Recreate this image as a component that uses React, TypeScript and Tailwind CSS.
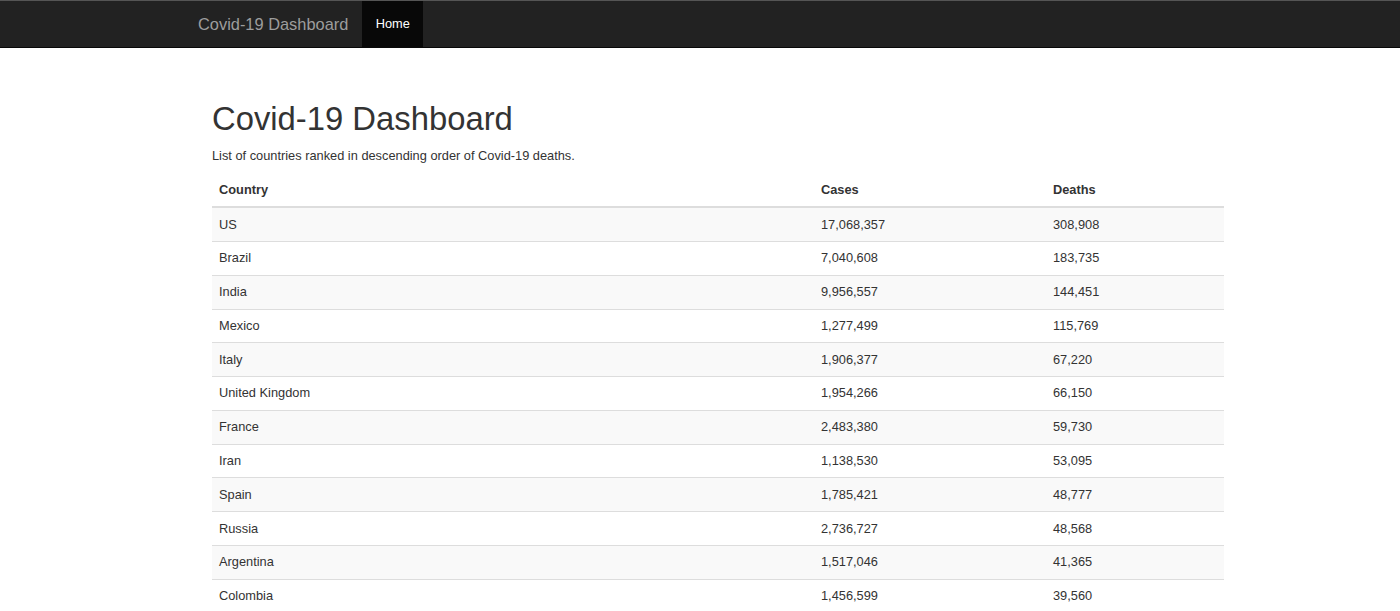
import React from "react";

const rows: [string, string, string][] = [
  ["US", "17,068,357", "308,908"],
  ["Brazil", "7,040,608", "183,735"],
  ["India", "9,956,557", "144,451"],
  ["Mexico", "1,277,499", "115,769"],
  ["Italy", "1,906,377", "67,220"],
  ["United Kingdom", "1,954,266", "66,150"],
  ["France", "2,483,380", "59,730"],
  ["Iran", "1,138,530", "53,095"],
  ["Spain", "1,785,421", "48,777"],
  ["Russia", "2,736,727", "48,568"],
  ["Argentina", "1,517,046", "41,365"],
  ["Colombia", "1,456,599", "39,560"],
];

export default function App() {
  return (
    <div className="min-h-screen bg-white text-[#333] font-['Liberation_Sans',Arial,sans-serif]">
      <nav className="bg-[#222] border-t border-t-[#555] border-b border-b-[#080808]">
        <div className="flex h-[46px] pl-[183px]">
          <a href="#" className="pl-[15px] pr-[14px] flex items-center text-[16.4px] text-[#9d9d9d]">
            Covid-19 Dashboard
          </a>
          <a href="#" className="w-[61px] flex items-center justify-center bg-[#080808] text-white text-[12.8px]">
            Home
          </a>
        </div>
      </nav>

      <main className="pl-[212px] w-[1224px]">
        <h1 className="mt-[53px] text-[32.8px] leading-[36px] font-normal">Covid-19 Dashboard</h1>
        <p className="mt-[10px] text-[12.8px] leading-[18px]">
          List of countries ranked in descending order of Covid-19 deaths.
        </p>
        <table className="mt-[8px] w-full text-[12.8px] leading-[18px] border-collapse">
          <thead>
            <tr className="border-b-2 border-b-[#ddd]">
              <th className="text-left font-bold px-[7px] py-[7.6px] w-[602px]">Country</th>
              <th className="text-left font-bold px-[7px] py-[7.6px] w-[232px]">Cases</th>
              <th className="text-left font-bold px-[7px] py-[7.6px]">Deaths</th>
            </tr>
          </thead>
          <tbody>
            {rows.map((r, i) => (
              <tr
                key={r[0]}
                className={`${i % 2 === 0 ? "bg-[#f9f9f9]" : "bg-white"} ${i > 0 ? "border-t border-t-[#ddd]" : ""}`}
              >
                <td className="px-[7px] py-[7.4px]">{r[0]}</td>
                <td className="px-[7px] py-[7.4px]">{r[1]}</td>
                <td className="px-[7px] py-[7.4px]">{r[2]}</td>
              </tr>
            ))}
          </tbody>
        </table>
      </main>
    </div>
  );
}
